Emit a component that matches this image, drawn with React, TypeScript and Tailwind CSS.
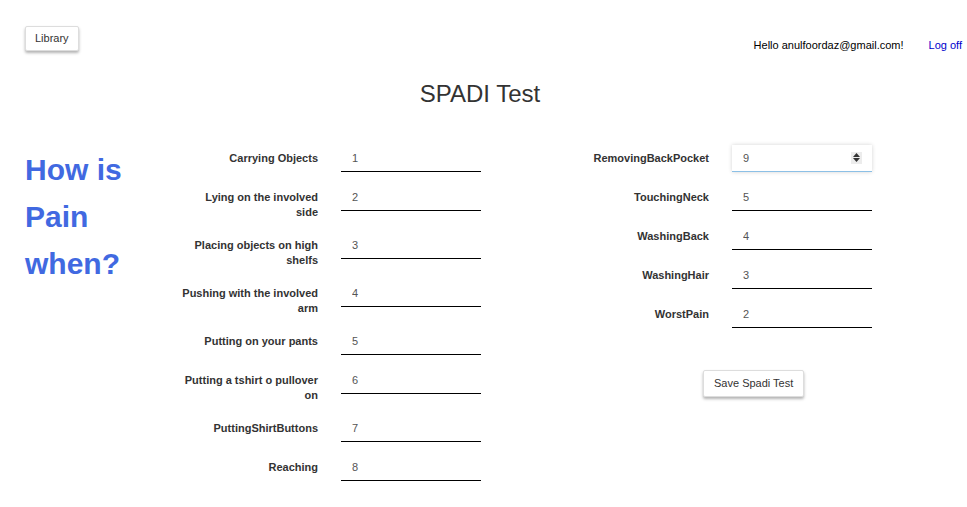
const LEFT_ROWS: { label: string; value: string }[] = [
  { label: 'Carrying Objects', value: '1' },
  { label: 'Lying on the involved side', value: '2' },
  { label: 'Placing objects on high shelfs', value: '3' },
  { label: 'Pushing with the involved arm', value: '4' },
  { label: 'Putting on your pants', value: '5' },
  { label: 'Putting a tshirt o pullover on', value: '6' },
  { label: 'PuttingShirtButtons', value: '7' },
  { label: 'Reaching', value: '8' },
]

const RIGHT_ROWS: { label: string; value: string }[] = [
  { label: 'RemovingBackPocket', value: '9' },
  { label: 'TouchingNeck', value: '5' },
  { label: 'WashingBack', value: '4' },
  { label: 'WashingHair', value: '3' },
  { label: 'WorstPain', value: '2' },
]

function SpinIcon() {
  return (
    <span className="absolute right-[10px] top-[7px] w-[11px] h-[12px] bg-[#ececec] flex flex-col items-center justify-center gap-[1px]">
      <svg width="7" height="4" viewBox="0 0 7 4">
        <path d="M0 4 L3.5 0 L7 4 Z" fill="#333" />
      </svg>
      <svg width="7" height="4" viewBox="0 0 7 4">
        <path d="M0 0 L3.5 4 L7 0 Z" fill="#333" />
      </svg>
    </span>
  )
}

function FormRow({ label, value, focused }: { label: string; value: string; focused?: boolean }) {
  return (
    <div className="flex items-start mb-[12px]">
      <label className="w-[140px] pl-[3px] pt-[6px] text-right text-[11px] leading-[15px] font-bold text-[#333]">
        {label}
      </label>
      <div
        className={`relative ml-[23px] w-[140px] h-[27px] ${
          focused
            ? 'bg-white border-b border-[#8cc0e6] shadow-[0_0_4px_rgba(0,0,0,0.18)]'
            : 'border-b border-black'
        }`}
      >
        <input
          readOnly
          value={value}
          className="w-full h-full pl-[11px] text-[11px] text-[#555] bg-transparent outline-none font-['Liberation_Sans',Arial,sans-serif]"
        />
        {focused && <SpinIcon />}
      </div>
    </div>
  )
}

export default function App() {
  return (
    <div className="w-[967px] h-[507px] bg-white font-['Liberation_Sans',Arial,sans-serif] text-[#333]">
      <header className="flex items-start justify-between pt-[26px] pl-[25px] pr-[5px]">
        <button
          type="button"
          className="h-[25px] px-[9px] text-[11px] text-[#333] bg-white border border-[#ddd] rounded-[2px] shadow-[0_2px_3px_rgba(0,0,0,0.3)]"
        >
          Library
        </button>
        <div className="flex items-center mt-[11px] text-[11px]">
          <span className="text-black">Hello anulfoordaz@gmail.com!</span>
          <a className="ml-[25px] text-[#0000cc]">Log off</a>
        </div>
      </header>

      <h1 className="mt-[26px] pr-[7px] text-center text-[24px] leading-[28px] text-[#333]">SPADI Test</h1>

      <main className="flex items-start mt-[37px] pl-[25px]">
        <div className="w-[153px] pt-[1px] text-[30px] leading-[47px] font-bold text-[#4169e1]">
          How is
          <br />
          Pain
          <br />
          when?
        </div>

        <div className="flex flex-col">
          {LEFT_ROWS.map((row) => (
            <FormRow key={row.label} label={row.label} value={row.value} />
          ))}
        </div>

        <div className="flex flex-col ml-[88px]">
          {RIGHT_ROWS.map((row, i) => (
            <FormRow key={row.label} label={row.label} value={row.value} focused={i === 0} />
          ))}
          <div className="mt-[30px] ml-[134px]">
            <button
              type="button"
              className="h-[27px] px-[10px] text-[11px] text-[#333] bg-white border border-[#ddd] rounded-[2px] shadow-[0_2px_3px_rgba(0,0,0,0.3)]"
            >
              Save Spadi Test
            </button>
          </div>
        </div>
      </main>
    </div>
  )
}
